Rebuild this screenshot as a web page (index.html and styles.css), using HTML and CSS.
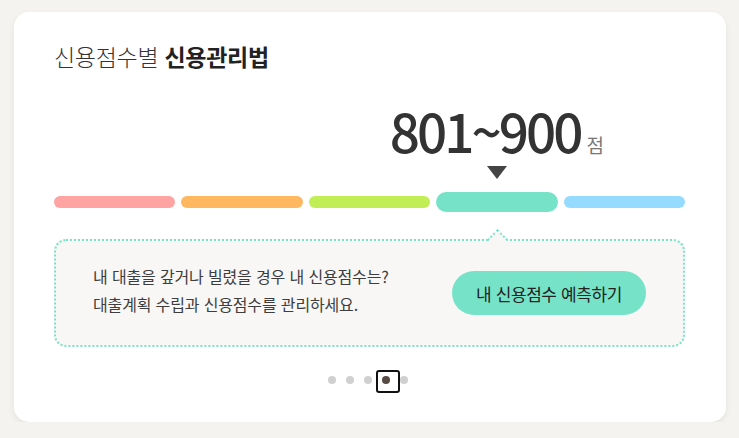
FILE: index.html
```html
<!DOCTYPE html>
<html lang="ko">
<head>
<meta charset="utf-8">
<title>신용점수별 신용관리법</title>
<link rel="stylesheet" href="styles.css">
</head>
<body>
<section class="card">
  <h2 class="title"><span class="light">신용점수별</span> <strong>신용관리법</strong></h2>
  <div class="grid score-row">
    <div class="cell-active score"><span class="num">801~900</span><span class="unit">점</span></div>
  </div>
  <div class="grid tri-row">
    <div class="cell-active tri-wrap"><span class="tri"></span></div>
  </div>
  <div class="grid bars">
    <span class="bar b1"></span>
    <span class="bar b2"></span>
    <span class="bar b3"></span>
    <span class="bar b4 active"></span>
    <span class="bar b5"></span>
  </div>
  <div class="box">
    <span class="caret"></span>
    <p class="msg">내 대출을 갚거나 빌렸을 경우 내 신용점수는?<br>대출계획 수립과 신용점수를 관리하세요.</p>
    <button class="cta" type="button">내 신용점수 예측하기</button>
  </div>
  <div class="dots">
    <span class="dot"></span>
    <span class="dot"></span>
    <span class="dot"></span>
    <span class="dot on"></span>
    <span class="dot"></span>
  </div>
</section>
</body>
</html>
```
FILE: styles.css
```css
* { box-sizing: border-box; }
html, body { margin: 0; }
body {
  background: #f4f3ef;
  padding: 12px 13px 0 14px;
  font-family: "Noto Sans CJK KR", "Noto Sans", sans-serif;
  color: #333;
}
.card {
  width: 712px;
  background: #fff;
  border-radius: 15px;
  box-shadow: 0 3px 6px rgba(0, 0, 0, 0.07);
  padding: 28px 41px 38px 40px;
}
.title {
  margin: 0;
  font-size: 23px;
  line-height: 32px;
  font-weight: 400;
  color: #333;
  letter-spacing: -0.3px;
}
.title .light { font-weight: 300; }
.title strong { font-weight: 700; color: #222; }
.grid {
  display: grid;
  grid-template-columns: repeat(5, minmax(0, 1fr));
  column-gap: 6px;
}
.cell-active {
  grid-column: 4;
  display: flex;
  justify-content: center;
}
.score-row { margin-top: 32px; }
.score { align-items: baseline; white-space: nowrap; height: 52px; }
.num {
  font-size: 53px;
  line-height: 52px;
  font-weight: 500;
  color: #333;
  letter-spacing: -3px;
}
.unit {
  font-size: 19px;
  color: #777;
  margin-left: 6px;
}
.tri-row { margin-top: 10px; }
.tri {
  width: 0;
  height: 0;
  border-left: 10px solid transparent;
  border-right: 10px solid transparent;
  border-top: 13px solid #444;
}
.bars {
  margin-top: 13px;
  height: 20px;
  align-items: center;
}
.bar { height: 12px; border-radius: 6px; }
.bar.active { height: 20px; border-radius: 10px; }
.b1 { background: #ffa3a3; }
.b2 { background: #ffb760; }
.b3 { background: #c2ee55; }
.b4 { background: #76e3c8; }
.b5 { background: #94dbff; }
.box {
  position: relative;
  margin-top: 27px;
  height: 108px;
  border: 2px dotted #7ee2c9;
  border-radius: 12px;
  background: #f8f7f5;
  display: flex;
  align-items: center;
  justify-content: space-between;
  padding: 0 37px 0 37px;
}
.caret {
  position: absolute;
  top: -9px;
  left: 434px;
  width: 15px;
  height: 15px;
  background: #f8f7f5;
  border-top: 2px dotted #7ee2c9;
  border-left: 2px dotted #7ee2c9;
  transform: rotate(45deg);
}
.msg {
  margin: 0;
  font-size: 16px;
  line-height: 28px;
  color: #3d3d3d;
  letter-spacing: -0.15px;
  margin-top: -6px;
}
.cta {
  width: 194px;
  height: 44px;
  border: 0;
  border-radius: 22px;
  background: #76e3c8;
  color: #222;
  font-family: inherit;
  font-size: 17px;
  letter-spacing: -0.4px;
  padding: 0;
}
.dots {
  margin-top: 29px;
  display: flex;
  justify-content: center;
  gap: 10px;
  padding-right: 4px;
}
.dot {
  position: relative;
  width: 8px;
  height: 8px;
  border-radius: 50%;
  background: #d0d0d0;
}
.dot.on { background: #574a45; }
.dot.on::after {
  content: "";
  position: absolute;
  left: -6px;
  top: -6px;
  width: 20px;
  height: 19px;
  border: 2px solid #111;
  border-radius: 3px;
}
```
